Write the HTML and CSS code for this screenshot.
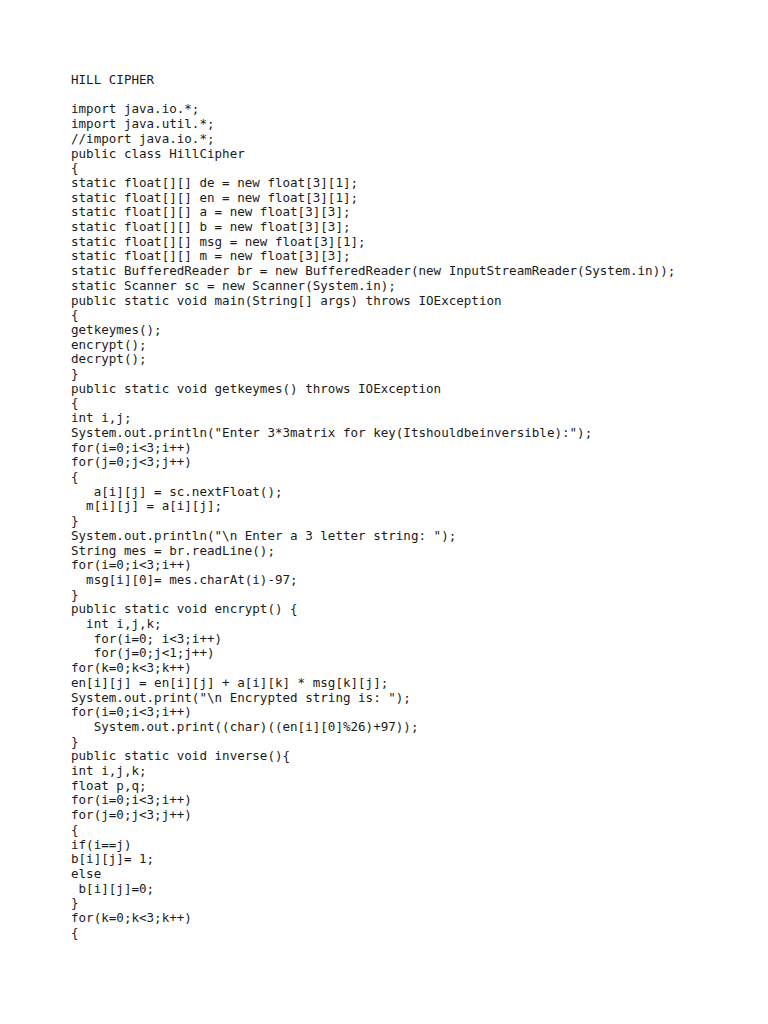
FILE: index.html
```html
<!DOCTYPE html>
<html>
<head>
<meta charset="utf-8">
<link rel="stylesheet" href="styles.css">
</head>
<body>
<main class="page">
<pre class="code">HILL CIPHER

import java.io.*;
import java.util.*;
//import java.io.*;
public class HillCipher
{
static float[][] de = new float[3][1];
static float[][] en = new float[3][1];
static float[][] a = new float[3][3];
static float[][] b = new float[3][3];
static float[][] msg = new float[3][1];
static float[][] m = new float[3][3];
static BufferedReader br = new BufferedReader(new InputStreamReader(System.in));
static Scanner sc = new Scanner(System.in);
public static void main(String[] args) throws IOException
{
getkeymes();
encrypt();
decrypt();
}
public static void getkeymes() throws IOException
{
int i,j;
System.out.println("Enter 3*3matrix for key(Itshouldbeinversible):");
for(i=0;i&lt;3;i++)
for(j=0;j&lt;3;j++)
{
   a[i][j] = sc.nextFloat();
  m[i][j] = a[i][j];
}
System.out.println("\n Enter a 3 letter string: ");
String mes = br.readLine();
for(i=0;i&lt;3;i++)
  msg[i][0]= mes.charAt(i)-97;
}
public static void encrypt() {
  int i,j,k;
   for(i=0; i&lt;3;i++)
   for(j=0;j&lt;1;j++)
for(k=0;k&lt;3;k++)
en[i][j] = en[i][j] + a[i][k] * msg[k][j];
System.out.print("\n Encrypted string is: ");
for(i=0;i&lt;3;i++)
   System.out.print((char)((en[i][0]%26)+97));
}
public static void inverse(){
int i,j,k;
float p,q;
for(i=0;i&lt;3;i++)
for(j=0;j&lt;3;j++)
{
if(i==j)
b[i][j]= 1;
else
 b[i][j]=0;
}
for(k=0;k&lt;3;k++)
{</pre>
</main>
</body>
</html>
```

FILE: styles.css
```css
html, body {
  margin: 0;
  padding: 0;
  background: #ffffff;
}
.page {
  padding: 73px 0 0 71px;
}
.code {
  margin: 0;
  font-family: "DejaVu Sans Mono", "Liberation Mono", monospace;
  font-size: 12.55px;
  line-height: 14.7px;
  color: #1a1a1a;
  white-space: pre;
}
```
